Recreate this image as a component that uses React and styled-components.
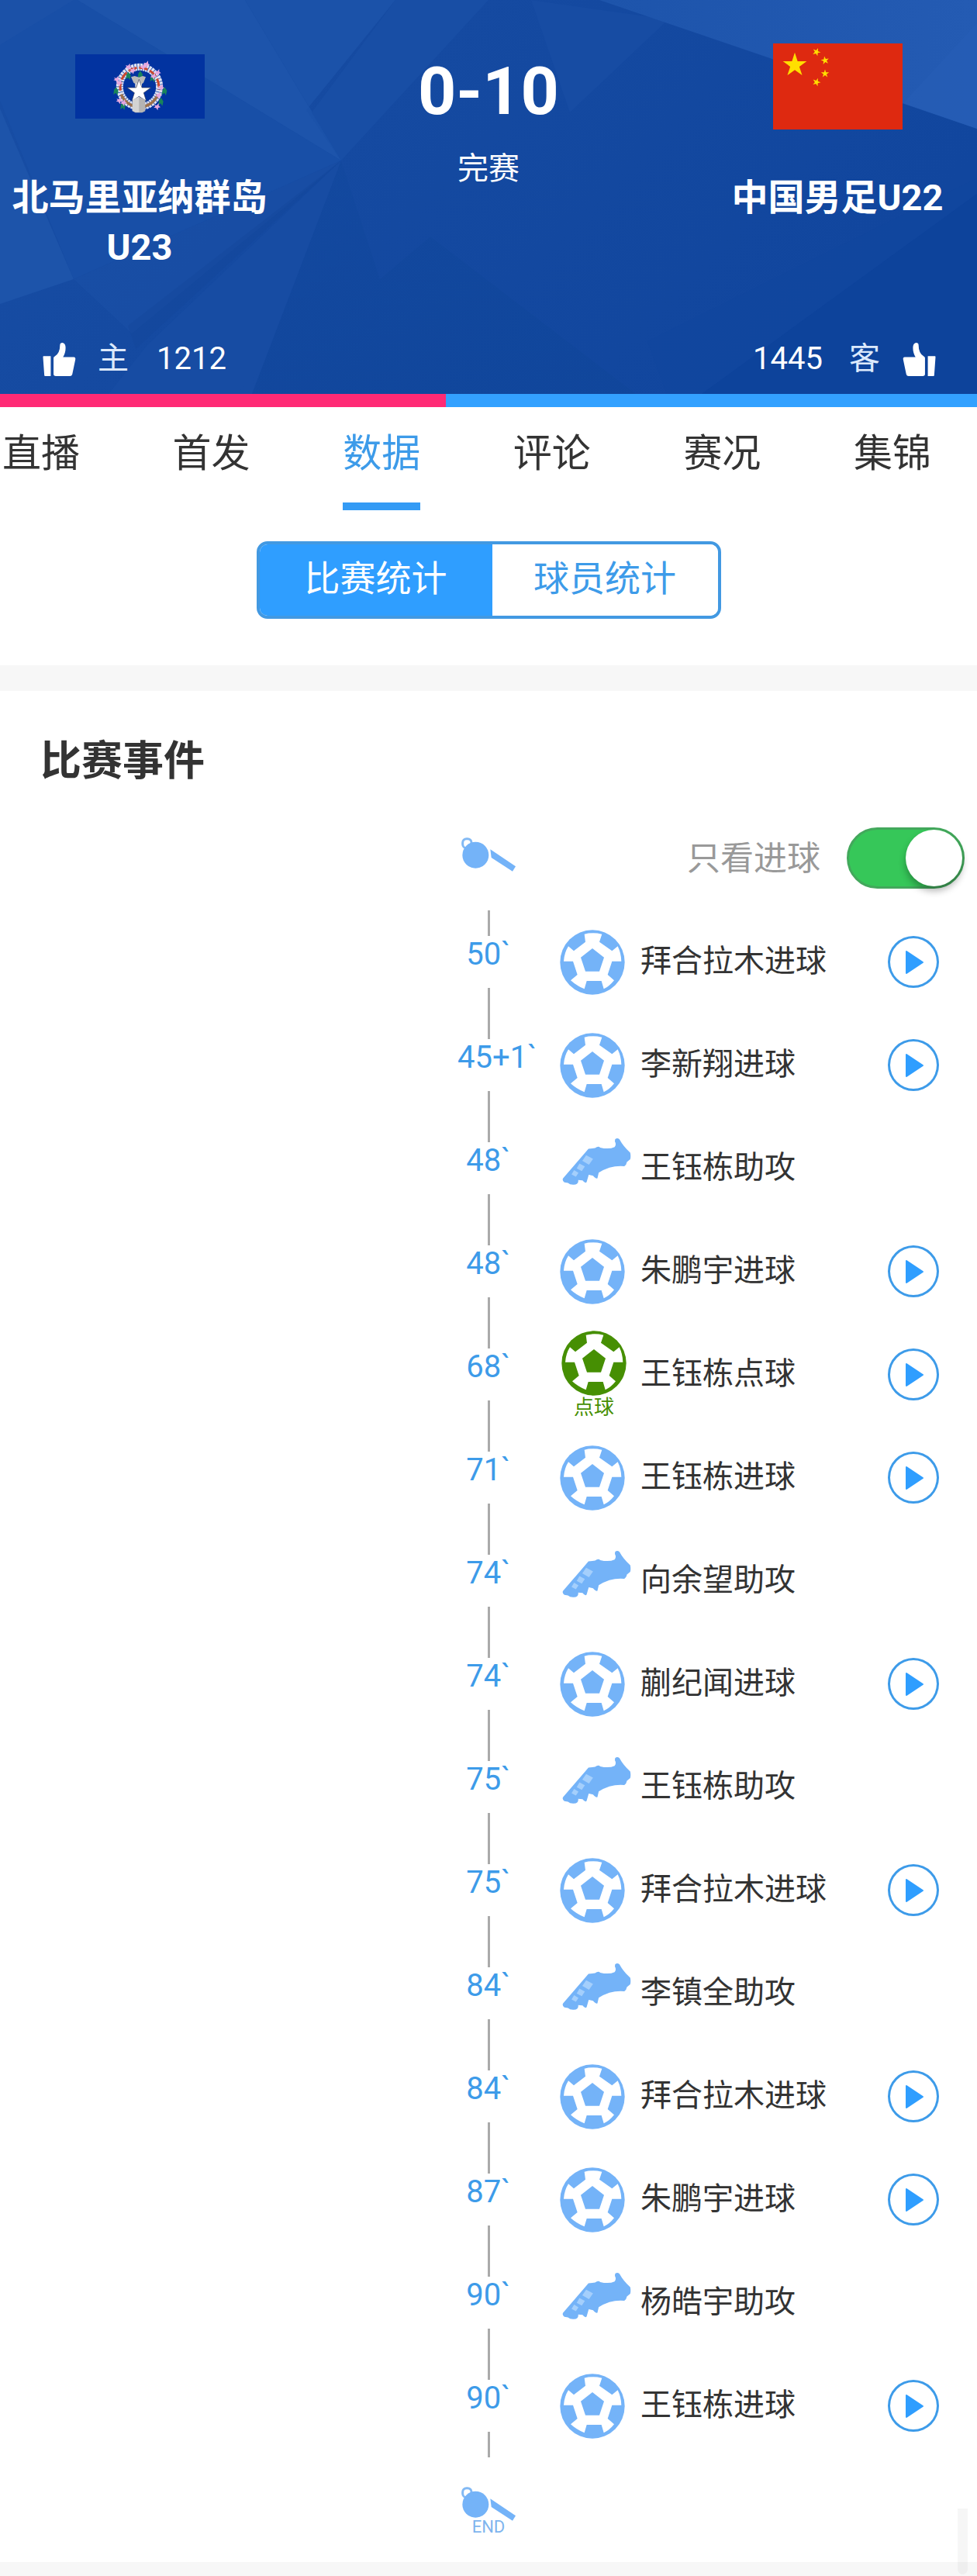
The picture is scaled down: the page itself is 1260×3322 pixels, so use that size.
import React, { useState } from 'react';
import styled, { createGlobalStyle } from 'styled-components';

// css
const GlobalStyle = createGlobalStyle`
  * {
    box-sizing: border-box;
  }

  body {
    margin: 0;
    background: #fff;
    color: #333;
    font-family: Roboto, 'Noto Sans CJK SC', sans-serif;
  }

  button {
    padding: 0;
    border: 0;
    background: none;
    color: inherit;
    font-family: inherit;
    cursor: pointer;
  }

  svg {
    display: block;
  }
`;
const PageStyled = styled.div`
  position: relative;
`;
const HeaderStyled = styled.header`
  position: relative;
  color: #fff;
  background: #164ba1;
`;
const BackdropStyled = styled.svg`
  position: absolute;
  inset: 0;
  width: 100%;
  height: 100%;
`;
const ScoreBoardStyled = styled.div`
  position: relative;
  display: grid;
  grid-template-columns: 2fr 3fr 2fr;
  padding-top: 56px;
`;
const TeamStyled = styled.div`
  display: flex;
  flex-direction: column;
  align-items: center;
  gap: 56px;
  text-align: center;
`;
const FlagBoxStyled = styled.div`
  display: flex;
  align-items: center;
  height: 111px;
`;
const TeamNameStyled = styled.h2`
  margin: 0;
  min-height: 128px;
  font-size: 47px;
  line-height: 64px;
  font-weight: 700;
`;
const ResultStyled = styled.div`
  display: flex;
  flex-direction: column;
  align-items: center;
  gap: 26px;
  padding-top: 12px;
`;
const ScoreStyled = styled.strong`
  font-size: 86px;
  line-height: 100px;
  font-weight: 700;
`;
const StatusStyled = styled.span`
  font-size: 40px;
  line-height: 48px;
`;
const VotesStyled = styled.div`
  position: relative;
  display: flex;
  justify-content: space-between;
  padding: 88px 53px 21px 55px;
`;
const VoteStyled = styled.button`
  display: flex;
  flex-direction: ${(props) => (props.$away ? 'row-reverse' : 'row')};
  align-items: center;
  font-size: 40px;
  line-height: 48px;
`;
const VoteSideStyled = styled.span`
  margin: 0 36px 0 28px;
  color: #dce9fb;

  ${VoteStyled}:last-child & {
    margin: 0 29px 0 34px;
  }
`;
const VoteBarStyled = styled.div`
  display: flex;
  height: 17px;
  background: #33a1ff;
`;
const VoteShareStyled = styled.div`
  background: #ff2a75;
`;
const TabsStyled = styled.nav`
  display: flex;
  justify-content: space-between;
  padding: 26px 59px 0 3px;
`;
const TabStyled = styled.button`
  border-bottom: 10px solid ${(props) => (props.$active ? '#349bf5' : '#fff')};
  padding-bottom: 29px;
  color: ${(props) => (props.$active ? '#3d9be9' : '#333')};
  font-size: 50px;
  line-height: 68px;
`;
const SegmentStyled = styled.div`
  display: flex;
  width: 599px;
  height: 100px;
  margin: 40px auto 60px;
  border: 4px solid #4299e2;
  border-radius: 14px;
  overflow: hidden;
`;
const SegmentButtonStyled = styled.button`
  flex: 1;
  padding-bottom: 4px;
  background: ${(props) => (props.$active ? '#2f9eff' : '#fff')};
  color: ${(props) => (props.$active ? '#fff' : '#3d9be9')};
  font-size: 46px;
  line-height: 64px;

  &:first-child {
    flex: 0 0 300px;
  }
`;
const DividerStyled = styled.div`
  height: ${(props) => (props.$last ? 18 : 33)}px;
  background: #f7f7f7;
`;
const TitleStyled = styled.h3`
  margin: 0;
  padding: 61px 52px 27px;
  font-size: 53px;
  line-height: 60px;
  font-weight: 700;
`;
const RowStyled = styled.div`
  display: grid;
  grid-template-columns: 1fr 80px 1fr;
  align-items: center;
  height: ${(props) => props.$height}px;
`;
const MiddleStyled = styled.div`
  display: flex;
  flex-direction: column;
  align-items: center;
  grid-column: 2;
`;
const FilterStyled = styled.label`
  display: flex;
  align-items: center;
  justify-content: flex-end;
  gap: 34px;
  padding-right: 16px;
  color: #999;
  font-size: 43px;
  line-height: 60px;
`;
const SwitchStyled = styled.input`
  appearance: none;
  width: 152px;
  height: 79px;
  margin: 0;
  border: 3px solid ${(props) => (props.checked ? '#43a85c' : '#ccc')};
  border-radius: 40px;
  background: ${(props) => (props.checked ? '#36c759' : '#eee')};

  &::before {
    content: '';
    display: block;
    width: 73px;
    height: 73px;
    margin-left: ${(props) => (props.checked ? 73 : 0)}px;
    border-radius: 50%;
    background: #fff;
    box-shadow: 0 6px 10px rgba(0, 0, 0, 0.3);
  }
`;
const EventListStyled = styled.ol`
  margin: 0;
  padding: 0 0 2px;
  list-style: none;
`;
const LineStyled = styled.span`
  width: 3px;
  height: 33px;
  background: #aaa;
`;
const TimeStyled = styled.time`
  width: 80px;
  height: 67px;
  color: #3d9be9;
  font-size: 40px;
  line-height: 48px;
  text-align: center;
  white-space: nowrap;
`;
const EventStyled = styled.div`
  display: flex;
  align-items: center;
  padding: 0 49px 0 52px;
`;
const EventIconStyled = styled.div`
  width: 92px;
  margin-right: 12px;
`;
const PenaltyStyled = styled.div`
  display: flex;
  flex-direction: column;
  align-items: center;
  width: 88px;
  color: #468f03;
  font-size: 26px;
  line-height: 30px;
`;
const EventTextStyled = styled.span`
  flex: 1;
  padding-bottom: 2px;
  color: #333;
  font-size: 40px;
  line-height: 48px;
`;
const PlayStyled = styled.button`
  display: flex;
  align-items: center;
  justify-content: center;
  width: 66px;
  height: 67px;
  border: 3px solid #3d9be9;
  border-radius: 50%;
`;
const EndLabelStyled = styled.span`
  color: #7fb5ee;
  font-family: 'Liberation Sans Narrow', Roboto, sans-serif;
  font-size: 22px;
  line-height: 20px;
`;
const ScrollThumbStyled = styled.div`
  position: absolute;
  right: 12px;
  bottom: 2px;
  width: 13px;
  height: 85px;
  border-radius: 0 0 7px 7px;
  background: rgba(0, 0, 0, 0.035);
`;

const Backdrop = () => (
  <BackdropStyled viewBox="0 0 1260 508" preserveAspectRatio="none" aria-hidden="true">
    <defs>
      <linearGradient id="base" x1="0" y1="0" x2="1" y2="0.4">
        <stop offset="0" stopColor="#184ea5" />
        <stop offset="0.4" stopColor="#154aa1" />
        <stop offset="1" stopColor="#11469e" />
      </linearGradient>
      <linearGradient id="corner" x1="0" y1="0" x2="1" y2="0">
        <stop offset="0" stopColor="#1d54ab" />
        <stop offset="1" stopColor="#245bb3" />
      </linearGradient>
      <linearGradient id="shade" x1="0" y1="0" x2="1" y2="1">
        <stop offset="0" stopColor="#10469b" stopOpacity="0.3" />
        <stop offset="1" stopColor="#10469b" stopOpacity="0.8" />
      </linearGradient>
    </defs>
    <rect width="1260" height="508" fill="url(#base)" />
    <polygon points="0,0 100,0 440,207 95,360 0,130" fill="#184fa7" />
    <polygon points="0,0 95,0 0,58" fill="#1b51a8" />
    <polygon points="0,140 95,360 0,392" fill="#1d54aa" />
    <polygon points="100,0 316,0 440,207" fill="#1d54ab" />
    <polygon points="316,0 510,0 395,142 440,207" fill="#1b52a9" />
    <polygon points="510,0 630,0 440,207 402,145" fill="#184ea5" />
    <polygon points="440,207 170,430 95,360" fill="#1a50a7" opacity="0.6" />
    <polygon points="440,207 175,450 165,420" fill="#134799" opacity="0.3" />
    <polygon points="440,207 325,508 140,508 190,445" fill="#194fa5" opacity="0.6" />
    <polygon points="440,207 325,508 820,508 555,305 490,360" fill="url(#shade)" />
    <polygon points="685,0 862,25 735,145" fill="#174ca3" />
    <polygon points="773,0 1260,0 1260,166" fill="url(#corner)" />
    <polygon points="1260,30 1260,166 1165,133" fill="#275eb6" opacity="0.6" />
    <polygon points="1260,230 835,440 860,508 905,508 1260,250" fill="#11469e" opacity="0.6" />
    <polygon points="1260,250 905,508 1260,508" fill="#0d439b" />
  </BackdropStyled>
);

const flowers = [
  [205, 50], [222, 64], [275, 40], [262, 50], [318, 72], [302, 86],
  [160, 98], [170, 112], [331, 130], [170, 180], [186, 188], [322, 160], [316, 204],
];
const leaves = [
  [206, 86], [252, 82], [300, 94], [158, 145], [346, 145], [185, 202], [332, 186],
];

const HomeFlag = () => (
  <svg width="167" height="83" viewBox="0 0 501 249" role="img" aria-label="北马里亚纳群岛">
    <rect width="501" height="249" fill="#0233a0" />
    <g fill="none">
      <circle cx="249" cy="126" r="77" stroke="#dfe3f2" strokeWidth="27" strokeDasharray="9 2" />
      <path d="M175 140A75 75 0 1 1 323 138" stroke="#c9472e" strokeWidth="9" strokeDasharray="34 9" />
      <path d="M178 155A76 76 0 0 0 320 155" stroke="#9a704d" strokeWidth="11" />
    </g>
    {leaves.map(([x, y]) => (
      <path key={`${x}-${y}`} d={`M${x} ${y - 18}l9 14-4 18-6-10-9 7 2-18z`} fill="#19845a" />
    ))}
    {flowers.map(([x, y]) => (
      <path
        key={`${x}-${y}`}
        d={`M${x} ${y}m-10-8l9 2 8-9 0 10 7 6-9 2-2 10-6-9-9-2 6-4z`}
        fill="#e6a8de"
      />
    ))}
    <path d="M216 88l14-4 17 5 14-5 12 4-9 22-10 8h-16l-12-8z" fill="#b9b9b9" />
    <path d="M232 112h26v20h-26z" fill="#d9d9d9" />
    <path
      d="M247 97l11 32h35l-28 20 10 32-28-18-28 18 10-32-28-20h35z"
      fill="#fff"
      stroke="#333a55"
      strokeWidth="2"
    />
    <path d="M222 176l25-12 24 12v44l-12 6h-26l-12-6z" fill="#b4b4b4" />
    <path d="M222 176l25-12v60h-14l-12-6z" fill="#d3d3d3" />
  </svg>
);

const star = 'M0-10L2.25-3.1H9.5L3.63 1.18 5.88 8.1 0 3.82-5.88 8.1-3.63 1.18-9.5-3.1H-2.25Z';

const AwayFlag = () => (
  <svg width="167" height="111" viewBox="0 0 167 111" role="img" aria-label="中国">
    <rect width="167" height="111" fill="#de2910" />
    <g fill="#ffde00">
      <path d={star} transform="translate(28 28) scale(1.62)" />
      <path d={star} transform="translate(56 11) rotate(22) scale(.55)" />
      <path d={star} transform="translate(67 22) rotate(-10) scale(.55)" />
      <path d={star} transform="translate(67 39) scale(.55)" />
      <path d={star} transform="translate(56 50) rotate(20) scale(.55)" />
    </g>
  </svg>
);

const Thumb = ({ flip }) => (
  <svg width="43" height="43" viewBox="0 0 127 130" fill="#fff" aria-hidden="true">
    <g transform={flip ? 'translate(127 0) scale(-1 1)' : undefined}>
      <path d="M2 52h28v78H8q-3 0-3-4L0 56q0-4 2-4z" />
      <path d="M41 60q0-4 4-6Q66 42 66 10 66 0 76 0q12 2 12 20 0 20-10 36h42q8 1 6 10l-12 57q-2 7-9 7H50q-9 0-9-8z" />
    </g>
  </svg>
);

const Ball = ({ color = '#74b3f8' }) => (
  <svg width="84" height="84" viewBox="0 0 252 252" aria-hidden="true">
    <circle cx="126" cy="126" r="125" fill={color} />
    <path
      d="M95 17Q127 9 163 17L153 47 202 82 224 64Q237 90 238 122L202 122 185 174 210 196Q192 219 170 229L161 198H104L95 229Q63 216 42 196L68 174 51 122H15Q17 90 33 64L54 82 99 47Z"
      fill="#fff"
    />
    <path d="M126 72L171 107 153 161H99L81 107Z" fill={color} />
  </svg>
);

const Boot = () => (
  <svg width="92" height="78" viewBox="-9 0 277 236" aria-hidden="true">
    <path
      d="M206 4Q214-4 223 4 238 32 265 56 268 70 265 82L252 92Q250 104 242 109 190 104 142 134L137 156Q130 158 120 146L103 142 95 170Q90 178 79 164L62 163Q64 180 45 181 30 182 22 174L8 172Q-2 164 3 156L48 104 102 41 128 38Q140 28 148 36 182 44 204 34 212 24 205 12Z"
      fill="#74b3f8"
    />
    <path d="M93 66l27 14-16 23-26-15zM67 98l21 12-12 18-20-11zM46 124l17 11-10 15-17-9z" fill="#a4cffc" />
  </svg>
);

const Whistle = ({ end }) => (
  <svg width="70" height={end ? 42 : 54} viewBox={end ? '0 0 210 126' : '0 0 210 162'} overflow="visible" aria-hidden="true">
    <rect x="5" y="5" width="34" height="36" rx="15" fill="none" stroke="#82b9f4" strokeWidth="9" />
    <circle cx="55" cy="68" r="51" fill="#74b3f8" />
    <path d="M112 46L210 112 198 131 116 78Z" fill="#74b3f8" />
  </svg>
);

const tabs = ['直播', '首发', '数据', '评论', '赛况', '集锦'];
const segments = ['比赛统计', '球员统计'];
const votes = { home: 1212, away: 1445 };
const events = [
  { time: '50`', text: '拜合拉木进球', type: 'goal' },
  { time: '45+1`', text: '李新翔进球', type: 'goal' },
  { time: '48`', text: '王钰栋助攻', type: 'assist' },
  { time: '48`', text: '朱鹏宇进球', type: 'goal' },
  { time: '68`', text: '王钰栋点球', type: 'penalty' },
  { time: '71`', text: '王钰栋进球', type: 'goal' },
  { time: '74`', text: '向余望助攻', type: 'assist' },
  { time: '74`', text: '蒯纪闻进球', type: 'goal' },
  { time: '75`', text: '王钰栋助攻', type: 'assist' },
  { time: '75`', text: '拜合拉木进球', type: 'goal' },
  { time: '84`', text: '李镇全助攻', type: 'assist' },
  { time: '84`', text: '拜合拉木进球', type: 'goal' },
  { time: '87`', text: '朱鹏宇进球', type: 'goal' },
  { time: '90`', text: '杨皓宇助攻', type: 'assist' },
  { time: '90`', text: '王钰栋进球', type: 'goal' },
];

const EventIcon = ({ type }) => {
  if (type === 'assist') return <Boot />;
  if (type === 'penalty') {
    return (
      <PenaltyStyled>
        <Ball color="#468f03" />
        点球
      </PenaltyStyled>
    );
  }
  return <Ball />;
};

const EventRow = ({ event }) => (
  <RowStyled as="li" $height={133}>
    <MiddleStyled>
      <LineStyled />
      <TimeStyled>{event.time}</TimeStyled>
      <LineStyled />
    </MiddleStyled>
    <EventStyled>
      <EventIconStyled>
        <EventIcon type={event.type} />
      </EventIconStyled>
      <EventTextStyled>{event.text}</EventTextStyled>
      {event.type !== 'assist' && (
        <PlayStyled aria-label={`播放 ${event.text}`}>
          <svg width="24" height="32" viewBox="0 0 24 32" overflow="visible" aria-hidden="true">
            <path d="M3 2L24 16 3 30Z" fill="#2f9eff" stroke="#2f9eff" strokeWidth="2" strokeLinejoin="round" />
          </svg>
        </PlayStyled>
      )}
    </EventStyled>
  </RowStyled>
);

const App = () => {
  const [tab, setTab] = useState('数据');
  const [segment, setSegment] = useState('比赛统计');
  const [onlyGoals, setOnlyGoals] = useState(true);

  const homeShare = (votes.home / (votes.home + votes.away)) * 100;

  return (
    <PageStyled>
      <GlobalStyle />
      <HeaderStyled>
        <Backdrop />
        <ScoreBoardStyled>
          <TeamStyled>
            <FlagBoxStyled>
              <HomeFlag />
            </FlagBoxStyled>
            <TeamNameStyled>北马里亚纳群岛U23</TeamNameStyled>
          </TeamStyled>
          <ResultStyled>
            <ScoreStyled>0-10</ScoreStyled>
            <StatusStyled>完赛</StatusStyled>
          </ResultStyled>
          <TeamStyled>
            <FlagBoxStyled>
              <AwayFlag />
            </FlagBoxStyled>
            <TeamNameStyled>中国男足U22</TeamNameStyled>
          </TeamStyled>
        </ScoreBoardStyled>
        <VotesStyled>
          <VoteStyled>
            <Thumb />
            <VoteSideStyled>主</VoteSideStyled>
            <span>{votes.home}</span>
          </VoteStyled>
          <VoteStyled $away>
            <Thumb flip />
            <VoteSideStyled>客</VoteSideStyled>
            <span>{votes.away}</span>
          </VoteStyled>
        </VotesStyled>
      </HeaderStyled>
      <VoteBarStyled>
        <VoteShareStyled style={{ width: `${homeShare}%` }} />
      </VoteBarStyled>
      <TabsStyled>
        {tabs.map((name) => (
          <TabStyled key={name} $active={name === tab} onClick={() => setTab(name)}>
            {name}
          </TabStyled>
        ))}
      </TabsStyled>
      <SegmentStyled>
        {segments.map((name) => (
          <SegmentButtonStyled
            key={name}
            $active={name === segment}
            onClick={() => setSegment(name)}
          >
            {name}
          </SegmentButtonStyled>
        ))}
      </SegmentStyled>
      <DividerStyled />
      <TitleStyled>比赛事件</TitleStyled>
      <RowStyled $height={135}>
        <MiddleStyled>
          <Whistle />
        </MiddleStyled>
        <FilterStyled>
          只看进球
          <SwitchStyled
            type="checkbox"
            role="switch"
            checked={onlyGoals}
            onChange={(e) => setOnlyGoals(e.target.checked)}
          />
        </FilterStyled>
      </RowStyled>
      <EventListStyled>
        {events.map((event) => (
          <EventRow key={event.time + event.text} event={event} />
        ))}
      </EventListStyled>
      <RowStyled $height={133}>
        <MiddleStyled>
          <Whistle end />
          <EndLabelStyled>END</EndLabelStyled>
        </MiddleStyled>
      </RowStyled>
      <DividerStyled $last />
      <ScrollThumbStyled />
    </PageStyled>
  );
};

export default App;
